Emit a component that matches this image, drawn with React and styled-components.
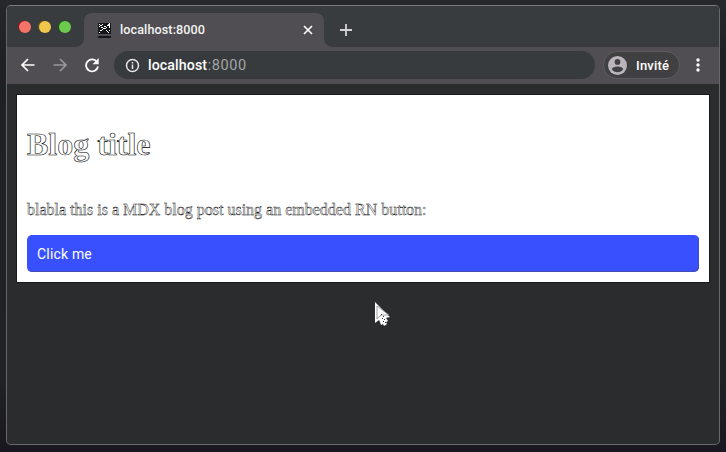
import React from "react";
import styled, { createGlobalStyle } from "styled-components";

const GlobalStyle = createGlobalStyle`
  * { box-sizing: border-box; }
  body { margin: 0; background: #222427; overflow: hidden; }
`;

const Desktop = styled.div`
  width: 726px;
  height: 452px;
  padding: 5px 6px 7px;
  background: linear-gradient(#27282a 0, #1e2024 60px, #202226 380px, #19171f 452px);
  font-family: Roboto, sans-serif;
`;

const Window = styled.main`
  width: 714px;
  height: 440px;
  display: flex;
  flex-direction: column;
  border: 1px solid #66686a;
  border-top-color: #7b7d7e;
  border-radius: 5px;
  overflow: hidden;
  background: #2b2c2e;
`;

const TabBar = styled.header`
  height: 41px;
  flex: none;
  display: flex;
  align-items: flex-start;
  background: #393c3e;
`;

const Lights = styled.div`
  display: flex;
  gap: 8px;
  width: 77px;
  padding: 15px 0 0 12px;
`;

const Light = styled.span`
  width: 12px;
  height: 12px;
  border-radius: 50%;
  background: ${(p) => p.$color};
  box-shadow: -1px -0.5px 0 ${(p) => p.$shade};
`;

const Tab = styled.div`
  position: relative;
  width: 240px;
  height: 34px;
  margin-top: 7px;
  padding: 0 11px 0 14px;
  display: flex;
  align-items: center;
  border-radius: 8px 8px 0 0;
  background: #504e52;
  color: #f3f3f3;
  &::before, &::after {
    content: "";
    position: absolute;
    bottom: 0;
    width: 8px;
    height: 8px;
  }
  &::before {
    left: -8px;
    background: radial-gradient(circle at 0 0, transparent 7.5px, #504e52 8px);
  }
  &::after {
    right: -8px;
    background: radial-gradient(circle at 100% 0, transparent 7.5px, #504e52 8px);
  }
`;

const TabTitle = styled.span`
  flex: 1;
  margin-left: 9px;
  font: 500 12.6px/16px Roboto, sans-serif;
  letter-spacing: 0.1px;
`;

const NewTab = styled.div`
  padding: 18px 0 0 16px;
  line-height: 0;
`;

const Toolbar = styled.nav`
  height: 37px;
  flex: none;
  display: flex;
  align-items: center;
  padding: 0 15px 1px 13px;
  background: #504e52;
`;

const NavIcons = styled.div`
  display: flex;
  gap: 16px;
  width: 94px;
`;

const Address = styled.div`
  width: 481px;
  height: 28px;
  padding-left: 11px;
  display: flex;
  align-items: center;
  gap: 8px;
  border-radius: 14px;
  background: #383b3d;
  color: #a2a4a5;
  font-size: 14.5px;
  letter-spacing: 0.6px;
`;

const Host = styled.span`
  color: #fff;
  font-weight: 500;
  font-size: 14.2px;
  letter-spacing: 0.1px;
  margin-right: 0.5px;
`;

const Profile = styled.div`
  width: 77px;
  height: 28px;
  margin: 0 16px 0 8px;
  padding-left: 4px;
  display: flex;
  align-items: center;
  gap: 9px;
  border: 1px solid #5d5c60;
  border-radius: 14px;
  background: #403f42;
  color: #fff;
  font-size: 13px;
  font-weight: 500;
  letter-spacing: 0.2px;
`;

const Page = styled.section`
  height: 187px;
  margin: 11px 10px 0 10px;
  padding: 31px 10px 0;
  background: #fff;
  box-shadow: 0 0 0 1px #18191c;
`;

const Title = styled.h1`
  margin: 0;
  font: bold 32px/37px "Liberation Serif", serif;
  color: #fff;
  -webkit-text-stroke: 0.6px #000;
`;

const Copy = styled.p`
  margin: 38px 0 16px;
  font: 16px/18px "Liberation Serif", serif;
  color: #fff;
  -webkit-text-stroke: 0.4px #000;
`;

const Button = styled.button`
  display: block;
  width: 100%;
  height: 37px;
  padding: 0 10px;
  border: 0;
  border-radius: 5px;
  box-shadow: inset -1px -1px 0 #414db9;
  background: #3850ff;
  color: #fff;
  font: 14px/18px Roboto, sans-serif;
  letter-spacing: 0.18px;
  text-align: left;
`;

const Cursor = styled.svg`
  position: absolute;
  left: 374px;
  top: 301px;
`;

const Arrow = ({ color, flip }) => (
  <svg width="16" height="16" viewBox="0 0 16 16" fill="none" stroke={color} strokeWidth="1.7">
    <path d={flip ? "M1.5 8H14M8 2l6 6-6 6" : "M14.5 8H2M8 2 2 8l6 6"} />
  </svg>
);

export default function App() {
  return (
    <Desktop>
      <GlobalStyle />
      <Window>
        <TabBar>
          <Lights>
            <Light $color="#f57469" $shade="#8b1c19" />
            <Light $color="#efc84b" $shade="#665014" />
            <Light $color="#6dca4e" $shade="#155e0d" />
          </Lights>
          <Tab>
            <svg width="13" height="16" viewBox="0 0 13 16" shapeRendering="crispEdges">
              <path d="M0 1h13v11H0zM0 14h13v1.5H0z" fill="#151617" />
              <path d="M1 2h1v1H1zM4 2h1v1H4zM2 3h2v1H2zM6 4h2v1H6zM3 5h2v1H3zM1 4h1v1H1zM9 3h1v1H9zM11 1h1v5h-1zM10 2h1v2h-1zM5 6h3v1H5zM8 5h1v1H8zM4 7h1v1H4zM2 8h2v1H2zM1 10h1v1H1zM8 8h1v1H8zM9 9h1v1H9zM10 10h1v1h-1zM11 8h1v1h-1z" fill="#fff" />
            </svg>
            <TabTitle>localhost:8000</TabTitle>
            <svg width="10" height="10" viewBox="0 0 10 10" stroke="#fff" strokeWidth="1.7"><path d="m1 1 8 8M9 1 1 9" /></svg>
          </Tab>
          <NewTab>
            <svg width="12" height="12" viewBox="0 0 12 12" stroke="#d2d3d4" strokeWidth="1.8"><path d="M0 6h12M6 0v12" /></svg>
          </NewTab>
        </TabBar>
        <Toolbar>
          <NavIcons>
            <Arrow color="#fff" />
            <Arrow color="#98969a" flip />
            <svg width="16" height="16" viewBox="0 0 16 16" fill="none">
              <path d="M13.2 5.2A6 6 0 1 0 14 9.5" stroke="#fff" strokeWidth="1.8" />
              <path d="M14.7 1v6.2H8.5z" fill="#fff" />
            </svg>
          </NavIcons>
          <Address>
            <svg width="15" height="15" viewBox="0 0 15 15" fill="none" stroke="#e6e7e7" strokeWidth="1.5">
              <circle cx="7.5" cy="7.5" r="6" /><path d="M7.5 6.6V11M7.5 4v1.5" />
            </svg>
            <span><Host>localhost</Host>:8000</span>
          </Address>
          <Profile>
            <svg width="19" height="19" viewBox="0 0 20 20">
              <circle cx="10" cy="10" r="10" fill="#b9b5bb" />
              <circle cx="10" cy="6.2" r="3" fill="#403f42" />
              <path d="M4 14c.8-4 11.200-4 12 0-2.600 4-9.400 4-12 0" fill="#403f42" />
            </svg>
            <span>Invité</span>
          </Profile>
          <svg width="4" height="14" viewBox="0 0 4 14" fill="#fff">
            <circle cx="2" cy="2" r="1.7" /><circle cx="2" cy="7" r="1.7" /><circle cx="2" cy="12" r="1.7" />
          </svg>
        </Toolbar>
        <Page>
          <Title>Blog title</Title>
          <Copy>blabla this is a MDX blog post using an embedded RN button:</Copy>
          <Button>Click me</Button>
        </Page>
      </Window>
      <Cursor width="18" height="27" viewBox="0 0 18 27">
        <path d="M1 1v21l4-3 1 2 1 3 2-1 1 2 3-2-1-2 2-1-2-3 4-1z" fill="#fff" />
        <path d="M3 5v13l4-4 8 0z" fill="#fff" stroke="#777" strokeWidth=".7" />
        <path d="M7 13h1v1H7zM9 15h1v1H9zM8 17h1v1H8zM10 18h1v1h-1zM9 20h1v1H9zM11 21h1v1h-1z" fill="#333" />
      </Cursor>
    </Desktop>
  );
}
